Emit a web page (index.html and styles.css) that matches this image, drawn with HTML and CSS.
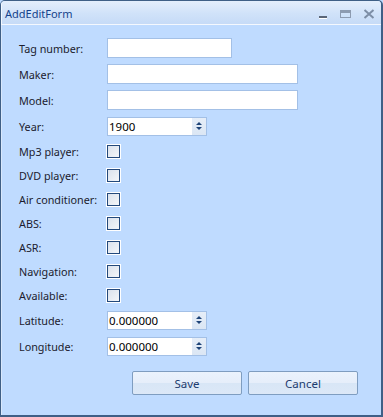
FILE: index.html
```html
<!DOCTYPE html>
<html>
<head>
<meta charset="utf-8">
<link rel="stylesheet" href="styles.css">
</head>
<body>
<div class="window">
  <div class="titlebar">
    <span class="title">AddEditForm</span>
    <div class="controls">
      <svg class="ctl" width="12" height="10" viewBox="0 0 12 10"><rect x="2" y="7" width="8" height="2" fill="#5a6678"/><rect x="2" y="9" width="8" height="1" fill="#ffffff"/></svg>
      <svg class="ctl" width="12" height="10" viewBox="0 0 12 10"><rect x="0.5" y="1.5" width="10" height="7" fill="none" stroke="#8d9bb0"/><rect x="1" y="2" width="9" height="2" fill="#8d9bb0"/></svg>
      <svg class="ctl" width="12" height="10" viewBox="0 0 12 10"><path d="M1.5 1 L10.5 9 M10.5 1 L1.5 9" stroke="#7d8ea6" stroke-width="2" fill="none"/></svg>
    </div>
  </div>
  <div class="body">
    <div class="form">
      <div class="row r26"><label>Tag number:</label><input class="text short" type="text"></div>
      <div class="row r26"><label>Maker:</label><input class="text long" type="text"></div>
      <div class="row r26"><label>Model:</label><input class="text long" type="text"></div>
      <div class="row r26"><label>Year:</label><div class="spin"><span class="val">1900</span><span class="btns"><i class="up"></i><i class="down"></i></span></div></div>
      <div class="row r24"><label>Mp3 player:</label><span class="check"></span></div>
      <div class="row r24"><label>DVD player:</label><span class="check"></span></div>
      <div class="row r24"><label>Air conditioner:</label><span class="check"></span></div>
      <div class="row r24"><label>ABS:</label><span class="check"></span></div>
      <div class="row r24"><label>ASR:</label><span class="check"></span></div>
      <div class="row r24"><label>Navigation:</label><span class="check"></span></div>
      <div class="row r24"><label>Available:</label><span class="check"></span></div>
      <div class="row r26"><label>Latitude:</label><div class="spin"><span class="val">0.000000</span><span class="btns"><i class="up"></i><i class="down"></i></span></div></div>
      <div class="row r26"><label>Longitude:</label><div class="spin"><span class="val">0.000000</span><span class="btns"><i class="up"></i><i class="down"></i></span></div></div>
    </div>
    <div class="buttons">
      <button class="btn">Save</button>
      <button class="btn">Cancel</button>
    </div>
  </div>
</div>
</body>
</html>
```
FILE: styles.css
```css
html, body {
  margin: 0;
  padding: 0;
  background: #bfdbff;
}
body {
  font-family: "Noto Sans", "DejaVu Sans", sans-serif;
}
.window {
  width: 383px;
  height: 417px;
  box-sizing: border-box;
  border: 1px solid #3f5f86;
  border-right-width: 2px;
  border-bottom-width: 2px;
  border-radius: 5px 5px 0 0;
  background: #bfdbff;
  display: flex;
  flex-direction: column;
  overflow: hidden;
}
.titlebar {
  height: 23px;
  flex: none;
  display: flex;
  align-items: center;
  justify-content: space-between;
  background: linear-gradient(#e4eefc, #d0e2f9 55%, #c6dbf7);
  border-left: 1px solid #f3f8ff;
  border-bottom: 1px solid #f4f8fe;
  padding-left: 3px;
}
.title {
  font-size: 11px;
  color: #15428b;
  padding-top: 1px;
}
.controls {
  display: flex;
  gap: 11px;
  padding-right: 6px;
  padding-top: 2px;
}
.ctl {
  display: block;
}
.body {
  flex: 1;
  border-left: 1px solid #d9e8fc;
  display: flex;
  flex-direction: column;
}
.form {
  padding: 10px 0 0 17px;
  display: flex;
  flex-direction: column;
}
.row {
  display: flex;
  align-items: center;
}
.r26 { height: 26px; }
.r24 { height: 24px; }
label {
  width: 88px;
  flex: none;
  font-size: 10.8px;
  color: #1c1c2e;
}
.text {
  box-sizing: border-box;
  height: 20px;
  border: 1px solid #a3c0e6;
  background: #fff;
  margin: 0;
  padding: 0 3px;
  outline: none;
}
.short { width: 125px; }
.long { width: 191px; }
.spin {
  box-sizing: border-box;
  width: 100px;
  height: 19px;
  border: 1px solid #a3c0e6;
  background: #fff;
  display: flex;
  align-items: stretch;
}
.val {
  flex: 1;
  font-size: 11.5px;
  color: #000;
  line-height: 17px;
  padding-left: 1px;
}
.btns {
  width: 14px;
  background: linear-gradient(#e6eef8, #dbe6f4);
  display: flex;
  flex-direction: column;
  align-items: center;
  justify-content: center;
  gap: 2px;
}
.up {
  width: 0; height: 0;
  border-left: 3px solid transparent;
  border-right: 3px solid transparent;
  border-bottom: 3px solid #1e4478;
}
.down {
  width: 0; height: 0;
  border-left: 3px solid transparent;
  border-right: 3px solid transparent;
  border-top: 3px solid #1e4478;
}
.check {
  box-sizing: border-box;
  width: 13px;
  height: 13px;
  border: 1px solid #23497c;
  background: linear-gradient(135deg, #dbe2ec, #f4f6f9);
  box-shadow: 0 0 0 1px #ffffff;
}
.buttons {
  display: flex;
  gap: 6px;
  padding-left: 130px;
  margin-top: 12px;
}
.btn {
  box-sizing: border-box;
  width: 110px;
  height: 24px;
  border: 1px solid #7f9dc0;
  border-radius: 2px;
  background: linear-gradient(#ebf3fd, #e6eefa 48%, #d8e6f6 52%, #dce8f7);
  font-family: "Noto Sans", "DejaVu Sans", sans-serif;
  font-size: 11.5px;
  color: #1e3c6e;
  padding: 0;
}
```
